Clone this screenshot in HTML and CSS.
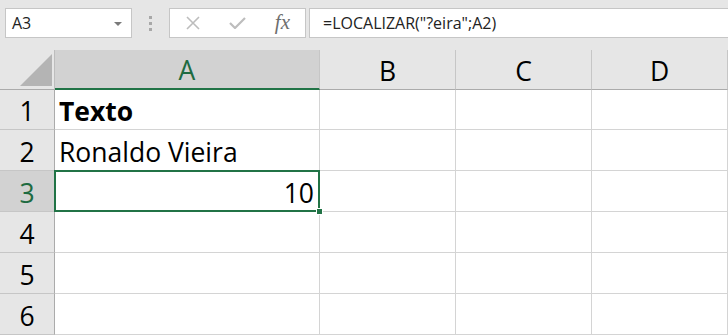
FILE: index.html
```html
<!DOCTYPE html>
<html lang="pt">
  <head>
    <meta charset="UTF-8" />
    <title>Planilha</title>
    <link rel="stylesheet" href="styles.css">
  </head>
  <body>
    <header class="toolbar">
      <div class="namebox">
        <span>A3</span>
        <span class="caret"></span>
      </div>
      <div class="grip"><i></i><i></i><i></i></div>
      <div class="fnbox">
        <svg class="icon" width="16" height="14" viewBox="0 0 16 14">
          <path d="M2 1 L14 13 M14 1 L2 13" stroke="#bdbdbd" stroke-width="1.6" fill="none" />
        </svg>
        <svg class="icon" width="17" height="12" viewBox="0 0 17 12">
          <path d="M1 6 L6 11 L16 1" stroke="#bdbdbd" stroke-width="2.2" fill="none" />
        </svg>
        <span class="fx">fx</span>
      </div>
      <div class="formula">=LOCALIZAR("?eira";A2)</div>
    </header>

    <main class="sheet">
      <div class="corner">
        <svg width="54" height="39" viewBox="0 0 54 39">
          <polygon points="20,36 52,4 52,36" fill="#b4b4b4" />
        </svg>
      </div>
      <div class="colhead valgt">A</div>
      <div class="colhead">B</div>
      <div class="colhead">C</div>
      <div class="colhead">D</div>

      <div class="rowhead">1</div>
      <div class="cell bold">Texto</div>
      <div class="cell"></div>
      <div class="cell"></div>
      <div class="cell"></div>

      <div class="rowhead">2</div>
      <div class="cell">Ronaldo Vieira</div>
      <div class="cell"></div>
      <div class="cell"></div>
      <div class="cell"></div>

      <div class="rowhead valgt">3</div>
      <div class="cell num active">10</div>
      <div class="cell"></div>
      <div class="cell"></div>
      <div class="cell"></div>

      <div class="rowhead">4</div>
      <div class="cell"></div>
      <div class="cell"></div>
      <div class="cell"></div>
      <div class="cell"></div>

      <div class="rowhead">5</div>
      <div class="cell"></div>
      <div class="cell"></div>
      <div class="cell"></div>
      <div class="cell"></div>

      <div class="rowhead">6</div>
      <div class="cell"></div>
      <div class="cell"></div>
      <div class="cell"></div>
      <div class="cell"></div>
    </main>
  </body>
</html>
```

FILE: styles.css
```css
body {
  margin: 0;
  background-color: #e6e6e6;
  font-family: "Open Sans", sans-serif;
  overflow: hidden;
}

.toolbar {
  display: flex;
  align-items: flex-start;
  height: 50px;
  padding: 8px 0 0 5px;
  box-sizing: border-box;
}

.namebox,
.fnbox,
.formula {
  height: 30px;
  box-sizing: border-box;
  background-color: white;
  border: 1px solid #c6c6c6;
  display: flex;
  align-items: center;
}

.namebox {
  width: 127px;
  justify-content: space-between;
  padding: 0 9px 0 6px;
  font-size: 16px;
  color: #222;
}

.caret {
  border-left: 4px solid transparent;
  border-right: 4px solid transparent;
  border-top: 4px solid #7a7a7a;
  margin-top: 1px;
}

.grip {
  width: 37px;
  height: 30px;
  display: flex;
  flex-direction: column;
  align-items: center;
  justify-content: center;
  gap: 3px;
}

.grip i {
  width: 3px;
  height: 3px;
  background-color: #a8a8a8;
}

.fnbox {
  width: 137px;
  padding: 0 15px 0 15px;
  justify-content: space-between;
}

.icon {
  display: block;
}

.fx {
  font-family: "Liberation Serif", serif;
  font-style: italic;
  font-size: 21px;
  color: #6e6e6e;
  margin-top: -2px;
}

.formula {
  flex: 1;
  margin-left: 3px;
  margin-right: -4px;
  padding-left: 13px;
  font-size: 16px;
  color: #222;
}

.sheet {
  display: grid;
  grid-template-columns: 55px 265px 136px 136px 136px;
  grid-template-rows: 40px 40px repeat(5, 41px);
  background-color: white;
  font-size: 26.5px;
  color: black;
}

.corner,
.colhead,
.rowhead,
.cell {
  box-sizing: border-box;
}

.corner {
  background-color: #e6e6e6;
  border-right: 1px solid #bdbdbd;
  border-bottom: 1px solid #ababab;
}

.corner svg {
  display: block;
}

.colhead {
  background-color: #e6e6e6;
  border-right: 1px solid #c6c6c6;
  border-bottom: 1px solid #ababab;
  display: flex;
  align-items: center;
  justify-content: center;
  padding-top: 2px;
}

.colhead.valgt {
  background-color: #d2d2d2;
  color: #1e6b41;
  border-bottom: 2px solid #217346;
}

.rowhead {
  background-color: #e6e6e6;
  border-right: 1px solid #ababab;
  border-bottom: 1px solid #c6c6c6;
  display: flex;
  align-items: center;
  justify-content: center;
  padding-top: 3px;
}

.rowhead.valgt {
  background-color: #d2d2d2;
  color: #1e6b41;
}

.cell {
  border-right: 1px solid #d4d4d4;
  border-bottom: 1px solid #d4d4d4;
  display: flex;
  align-items: center;
  padding: 3px 5px 0 4px;
  white-space: nowrap;
}

.bold {
  font-weight: bold;
}

.num {
  justify-content: flex-end;
}

.active {
  position: relative;
}

.active::before {
  content: "";
  position: absolute;
  top: -1px;
  left: -1px;
  right: -1px;
  bottom: -1px;
  border: 2px solid #217346;
}

.active::after {
  content: "";
  position: absolute;
  right: -4px;
  bottom: -4px;
  width: 5px;
  height: 5px;
  background-color: #217346;
  border: 1px solid white;
}
```
